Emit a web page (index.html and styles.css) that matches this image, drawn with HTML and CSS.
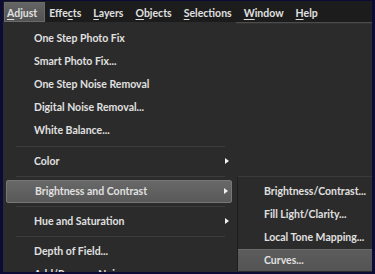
FILE: index.html
```html
<!DOCTYPE html>
<html lang="en">
<head>
    <meta charset="UTF-8">
    <title>Adjust menu</title>
    <link rel="stylesheet" href="styles.css">
</head>
<body>

<div class="frame">
    <div class="menubar">
        <span class="top-item open"><u>A</u>djust</span>
        <span class="top-item">Effe<u>c</u>ts</span>
        <span class="top-item"><u>L</u>ayers</span>
        <span class="top-item"><u>O</u>bjects</span>
        <span class="top-item"><u>S</u>elections</span>
        <span class="top-item"><u>W</u>indow</span>
        <span class="top-item"><u>H</u>elp</span>
    </div>

    <div class="body">
        <div class="dropdown">
            <div class="item">One Step Photo Fix</div>
            <div class="item">Smart Photo Fix...</div>
            <div class="item">One Step Noise Removal</div>
            <div class="item">Digital Noise Removal...</div>
            <div class="item">White Balance...</div>
            <div class="sep wide"></div>
            <div class="item sub">Color</div>
            <div class="sep"></div>
            <div class="item sub active">Brightness and Contrast</div>
            <div class="sep"></div>
            <div class="item sub">Hue and Saturation</div>
            <div class="sep"></div>
            <div class="item">Depth of Field...</div>
            <div class="item">Add/Remove Noise</div>
        </div>
        <div class="workspace"></div>

        <!-- submenu of Brightness and Contrast -->
        <div class="submenu">
            <div class="item">Brightness/Contrast...</div>
            <div class="item">Fill Light/Clarity...</div>
            <div class="item">Local Tone Mapping...</div>
            <div class="item active">Curves...</div>
        </div>
    </div>
</div>

</body>
</html>
```

FILE: styles.css
```css
body {
    margin: 0;
    padding: 0;
    background: #0b0b36;
    font-family: Lato, "Open Sans", sans-serif;
    font-size: 10.5px;
    font-weight: 700;
    color: #e0e0e0;
}
.frame {
    width: 369px;
    height: 271px;
    margin: 1px 3px 0 3px;
    background: #1c1c1c;
    display: flex;
    flex-direction: column;
    overflow: hidden;
}
.menubar {
    height: 21px;
    display: flex;
    align-items: flex-end;
    flex-shrink: 0;
    padding-left: 1px;
    box-sizing: border-box;
}
.top-item {
    height: 20px;
    line-height: 18px;
    padding: 2px 3px 0;
    margin-right: 6px;
    box-sizing: border-box;
    white-space: nowrap;
}
.top-item u {
    text-decoration-thickness: 1px;
    text-underline-offset: 2px;
}
.top-item.open {
    background: linear-gradient(#646464, #525252);
    border: 1px solid #6a6a6a;
    padding: 1px 7px 0 2px;
    margin-right: 1px;
}
.body {
    position: relative;
    flex: 1;
    display: flex;
}
.dropdown {
    width: 233px;
    background: #2b2b2b;
    padding-top: 5px;
    box-sizing: border-box;
}
.workspace {
    flex: 1;
    background: #2b2b2b;
    border-top: 1px solid #4c4c4c;
    box-shadow: inset 0 1px 0 #333;
}
.item {
    height: 23px;
    line-height: 23px;
    padding-left: 31px;
    position: relative;
    white-space: nowrap;
}
.item.sub::after {
    content: "";
    position: absolute;
    right: 7px;
    top: 8px;
    border-left: 4px solid #f0f0f0;
    border-top: 3px solid transparent;
    border-bottom: 3px solid transparent;
}
.dropdown .item.active {
    margin: 0 4px 0 3px;
    height: 21px;
    line-height: 21px;
    padding-left: 28px;
    background: linear-gradient(#686868, #595959);
    border: 1px solid #777;
    border-radius: 2px;
    box-sizing: content-box;
}
.dropdown .item.active::after {
    right: 3px;
    top: 7px;
}
.sep {
    height: 1px;
    margin: 3px 11px 3px 13px;
    background: #3c3c3c;
}
.sep.wide {
    margin-top: 4px;
}
.submenu {
    position: absolute;
    left: 234px;
    top: 154px;
    width: 136px;
    background: #2b2b2b;
    border-left: 1px solid #1e1e1e;
    border-top: 1px solid #3a3a3a;
    padding-top: 3px;
}
.submenu .item {
    padding-left: 26px;
}
.submenu .item.active {
    background: linear-gradient(#5c5c5c, #545454);
    border-top: 1px solid #6a6a6a;
    height: 21px;
    line-height: 20px;
}
```
